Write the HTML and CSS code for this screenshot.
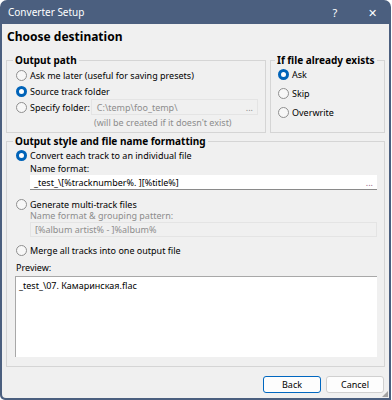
FILE: index.html
```html
<!DOCTYPE html>
<html lang="en">

<head>
    <meta charset="UTF-8">
    <title>Converter Setup</title>
    <link rel="stylesheet" href="styles.css">
</head>

<body>
    <div class="window">
        <div class="titlebar">
            <span class="title">Converter Setup</span>
            <span class="tb-btn help">?</span>
            <span class="tb-btn close">&#x2715;</span>
        </div>

        <div class="client">
            <h1>Choose destination</h1>

            <div class="top-row">
                <fieldset class="group path-group">
                    <legend>Output path</legend>
                    <label class="radio"><input type="radio" name="path"> Ask me later (useful for saving presets)</label>
                    <label class="radio"><input type="radio" name="path" checked> Source track folder</label>
                    <div class="folder-row">
                        <label class="radio"><input type="radio" name="path"> Specify folder:</label>
                        <div class="field disabled">C:\temp\foo_temp\<span class="dots">...</span></div>
                    </div>
                    <div class="hint">(will be created if it doesn't exist)</div>
                </fieldset>

                <fieldset class="group exists-group">
                    <legend>If file already exists</legend>
                    <label class="radio"><input type="radio" name="exists" checked> Ask</label>
                    <label class="radio"><input type="radio" name="exists"> Skip</label>
                    <label class="radio"><input type="radio" name="exists"> Overwrite</label>
                </fieldset>
            </div>

            <fieldset class="group style-group">
                <legend>Output style and file name formatting</legend>
                <label class="radio first"><input type="radio" name="style" checked> Convert each track to an individual file</label>
                <div class="sub-label">Name format:</div>
                <div class="field">_test_\[%tracknumber%. ][%title%]<span class="dots colored">...</span></div>

                <label class="radio gap"><input type="radio" name="style"> Generate multi-track files</label>
                <div class="sub-label muted">Name format &amp; grouping pattern:</div>
                <div class="field disabled">[%album artist% - ]%album%</div>

                <label class="radio gap merge"><input type="radio" name="style"> Merge all tracks into one output file</label>

                <div class="preview-label">Preview:</div>
                <div class="preview">_test_\07. Камаринская.flac</div>
            </fieldset>

            <div class="buttons">
                <button class="btn default">Back</button>
                <button class="btn">Cancel</button>
            </div>
            <div class="grip"></div>
        </div>
    </div>
</body>

</html>
```

FILE: styles.css
```css
body {
    margin: 0;
    font-family: "Noto Sans", sans-serif;
    font-size: 9px;
    color: #000;
    background: #fff;
}

.window {
    width: 391px;
    height: 400px;
    background: #4b5f7f;
    border-radius: 7px 7px 0 5px;
    display: flex;
    flex-direction: column;
}

.titlebar {
    height: 24px;
    flex-shrink: 0;
    display: flex;
    align-items: center;
    color: #fff;
}

.title {
    flex: 1;
    padding-left: 8px;
    font-size: 10px;
}

.tb-btn {
    width: 36px;
    text-align: center;
    font-size: 11px;
}

.close {
    width: 38px;
}

.client {
    flex: 1;
    margin: 0 2px 2px 2px;
    background: #f0f0f0;
    padding: 0 4px 0 4px;
    display: flex;
    flex-direction: column;
    position: relative;
    border-radius: 0 0 0 4px;
}

h1 {
    margin: 3px 0 7px 1px;
    font-size: 12px;
    line-height: 20px;
}

.top-row {
    display: flex;
    gap: 4px;
}

.group {
    margin: 0;
    padding: 0 7px 0 9px;
    border: 1px solid #d5d5d5;
    display: flex;
    flex-direction: column;
    min-width: 0;
}

.group legend {
    font-weight: bold;
    font-size: 10px;
    line-height: 13px;
    padding: 0 2px;
    margin-left: -3px;
    white-space: nowrap;
}

.path-group {
    flex: 1;
    height: 79px;
    box-sizing: border-box;
}

.exists-group {
    width: 115px;
    box-sizing: border-box;
    padding-left: 7px;
}

.radio {
    display: flex;
    align-items: center;
    height: 16px;
    white-space: nowrap;
}

.exists-group .radio {
    height: 19px;
}

.exists-group .radio:first-of-type {
    margin-top: -2px;
}

.radio input {
    appearance: none;
    margin: 0 3px 0 0;
    width: 11px;
    height: 11px;
    border: 1px solid #8f8f8f;
    border-radius: 50%;
    background: #f7f7f7;
    box-sizing: border-box;
    flex-shrink: 0;
}

.radio input:checked {
    border: 3px solid #0063b8;
    background: #fff;
}

.folder-row {
    display: flex;
    align-items: center;
    gap: 1px;
}

.field {
    height: 15px;
    box-sizing: border-box;
    background: #fff;
    border-bottom: 1px solid #8a8a8a;
    display: flex;
    align-items: center;
    padding: 0 4px;
    white-space: nowrap;
}

.field.disabled {
    background: #f0f0f0;
    border: 1px solid #e4e4e4;
    color: #8d8d8d;
}

.folder-row .field {
    flex: 1;
    height: 16px;
    padding-left: 5px;
}

.dots {
    margin-left: auto;
    color: #8d8d8d;
}

.dots.colored {
    color: #9a6a8a;
}

.hint {
    color: #8d8d8d;
    padding-left: 78px;
    margin-top: 1px;
    line-height: 14px;
}

.style-group {
    margin-top: 2px;
    padding-bottom: 9px;
}

.radio.first {
    height: 14px;
}

.sub-label {
    padding-left: 14px;
    line-height: 13px;
}

.sub-label.muted {
    line-height: 12px;
    margin-top: -2px;
    color: #8d8d8d;
}

.style-group .field {
    margin-left: 14px;
}

.radio.gap {
    margin-top: 6px;
}

.radio.merge {
    margin-top: 5px;
}

.preview-label {
    margin-top: 3px;
    line-height: 14px;
}

.preview {
    margin-top: 1px;
    height: 81px;
    box-sizing: border-box;
    background: #fff;
    border-top: 1px solid #a8a8a8;
    border-left: 1px solid #a8a8a8;
    padding: 2px 3px;
    margin-left: -1px;
}

.buttons {
    display: flex;
    justify-content: flex-end;
    gap: 5px;
    margin-top: 9px;
    padding-right: 1px;
}

.btn {
    width: 58px;
    height: 17px;
    font-family: inherit;
    font-size: 9px;
    background: #fdfdfd;
    border: 1px solid #d0d0d0;
    border-radius: 3px;
    padding: 0;
}

.btn.default {
    border: 1px solid #0067c0;
}

.grip {
    position: absolute;
    right: 1px;
    bottom: 1px;
    width: 6px;
    height: 6px;
    background: radial-gradient(circle, #a0a0a0 0.7px, transparent 0.9px) 0 0 / 2px 2px;
    clip-path: polygon(100% 0, 100% 100%, 0 100%);
}
```
